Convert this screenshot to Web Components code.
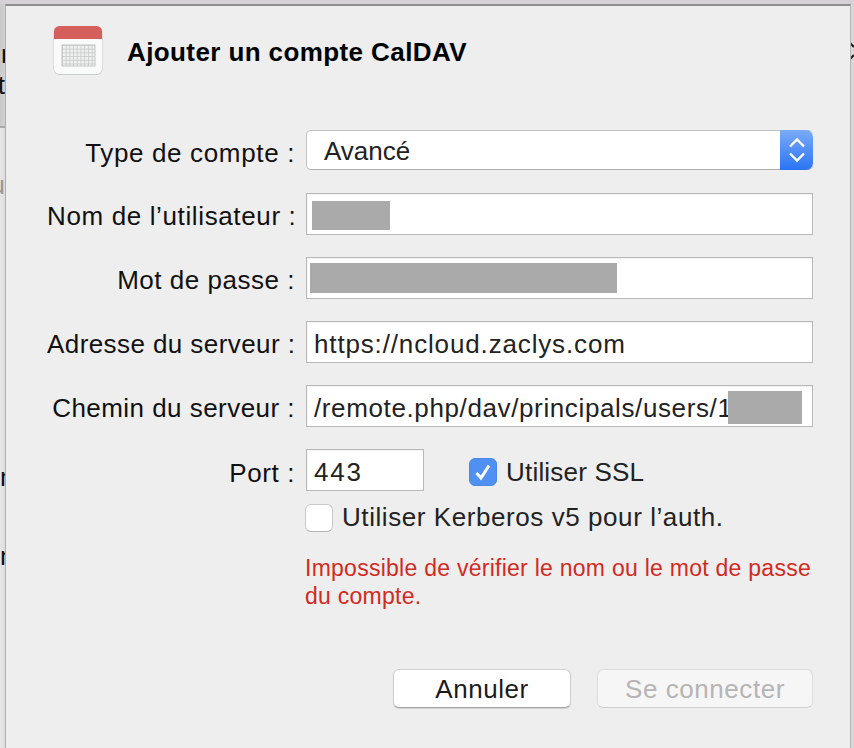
<!DOCTYPE html>
<html lang="fr"><head><meta charset="utf-8"><title>Ajouter un compte CalDAV</title>
<style>
html,body{margin:0;padding:0;height:100%}
body{width:854px;height:748px;overflow:hidden;font-family:"Liberation Sans",Arial,sans-serif}
</style></head><body>
<desk-backdrop>
<account-dialog>
<span slot="title">Ajouter un compte CalDAV</span>
<form-row label="Type de compte :" ls=".65" dy="3"><select-field value="Avancé"></select-field></form-row>
<form-row label="Nom de l’utilisateur :" ls=".63" dy="2"><text-field><redact-mark w="78" h="29" x="5" y="7"></redact-mark></text-field></form-row>
<form-row label="Mot de passe :" ls=".52" dy="2"><text-field><redact-mark w="307" h="30" x="3" y="5"></redact-mark></text-field></form-row>
<form-row label="Adresse du serveur :" ls=".42" dy="2"><text-field ls=".85">https://ncloud.zaclys.com</text-field></form-row>
<form-row label="Chemin du serveur :" ls=".46" dy="2"><text-field ls=".62">/remote.php/dav/principals/users/1<redact-mark w="74" h="33" x="421" y="5"></redact-mark></text-field></form-row>
<port-row></port-row>
</account-dialog>
</desk-backdrop>
<script>
function def(name, html){
  customElements.define(name, class extends HTMLElement{
    connectedCallback(){
      if(this.shadowRoot) return;
      const r=this.attachShadow({mode:'open'});
      r.innerHTML=typeof html==='function'?html(this):html;
    }
  });
}
def('desk-backdrop',`<style>
:host{display:block;position:relative;width:854px;height:748px;overflow:hidden;background:#e3e3e3}
.top{height:4px;background:#d5d2d5}
.l{position:absolute;left:0;top:4px;width:6px;height:123px;background:linear-gradient(90deg,#c9c9c9,#d3d3d3)}
.l2{position:absolute;left:0;top:128px;width:6px;height:620px;background:linear-gradient(90deg,#e6e6e6,#dcdcdc)}
.ln{position:absolute;left:0;top:126px;width:6px;height:2px;background:#a9a9a9}
.r{position:absolute;right:0;top:4px;width:4px;height:744px;background:#d8d8d8}
.g{position:absolute;font-size:26px;line-height:30px;color:#111;height:30px;overflow:hidden;width:5px}
svg.ch{position:absolute;right:0;top:40px}
</style>
<div class="top"></div><div class="l"></div><div class="l2"></div><div class="ln"></div><div class="r"></div>
<div class="g" style="left:1px;top:39px;height:24px">p</div>
<div class="g" style="left:-9px;width:14px;top:70px;text-align:right">t</div>
<div class="g" style="left:-14px;width:19px;top:170px;color:#999;text-align:right">u</div>
<div class="g" style="left:0;top:462px">n</div>
<div class="g" style="left:0;top:541px">n</div>
<svg class="ch" width="4" height="24" viewBox="0 0 4 24" fill="none" stroke="#222" stroke-width="2.200"><path d="M0 3 4 7M0 19 4 15"/></svg>
<slot></slot>`);
def('account-dialog',`<style>
:host{display:block;position:absolute;left:5px;top:4px;width:846px;height:760px;box-sizing:border-box;background:#eeeeee;border-left:1px solid #aeaeae;border-right:1px solid #b5b5b5;border-top:2px solid #8f8f8f;padding:19px 37px 0 41px;font-size:26px;color:#111}
header{display:flex;align-items:center;gap:24px;height:50px;margin-left:6px}
h1{margin:0;font-size:26px;font-weight:700;color:#000;line-height:30px;letter-spacing:.4px;transform:translateY(2px)}
main{display:flex;flex-direction:column;gap:22px;margin-top:54px}
.msg{margin:15px 0 0 258px;color:#d22a1e;font-size:23px;letter-spacing:.26px;line-height:28px;width:540px}
footer{display:flex;justify-content:flex-end;gap:26px;margin-top:59px;letter-spacing:.55px;width:766px}
</style>
<header><calendar-icon></calendar-icon><h1><slot name="title"></slot></h1></header>
<main><slot></slot></main>
<div class="msg">Impossible de vérifier le nom ou le mot de passe<br>du compte.</div>
<footer><push-button>Annuler</push-button><push-button disabled>Se connecter</push-button></footer>`);
def('calendar-icon',`<style>
:host{display:block;width:50px;height:50px;flex:none}svg{display:block}
</style><svg width="50" height="50" viewBox="0 0 50 50">
<defs><pattern id="p" x="9" y="20" width="3.700" height="3.700" patternUnits="userSpaceOnUse"><path d="M0 0H3.700M0 0V3.700" stroke="#c4c6c6" stroke-width="1.500" fill="none"/></pattern></defs>
<rect x="0.500" y="1" width="49" height="49" rx="6" fill="#c9c9c9"/>
<rect x="1" y="1" width="48" height="48" rx="5.500" fill="#f9fbfa"/>
<path d="M1 14V6.500A5.500 5.500 0 0 1 6.500 1H43.500A5.500 5.500 0 0 1 49 6.500V14Z" fill="#d55f5c"/>
<rect x="9" y="20" width="33" height="21" fill="#eef0ef"/>
<rect x="9" y="20" width="33" height="21" fill="url(#p)"/>
<rect x="9" y="20" width="33" height="21" fill="none" stroke="#c4c6c6"/>
</svg>`);
def('form-row',h=>`<style>
:host{display:grid;grid-template-columns:248px 507px;grid-auto-rows:42px;column-gap:11px;align-items:center}
label{text-align:right;white-space:nowrap;color:#111;letter-spacing:${h.getAttribute('ls')||0}px;transform:translateY(${h.getAttribute('dy')||0}px)}
</style><label>${h.getAttribute('label')}</label><div><slot></slot></div>`);
def('text-field',h=>`<style>
:host{display:flex;align-items:center;position:relative;box-sizing:border-box;height:42px;background:#fff;border:1px solid #b8b8b8;box-shadow:inset 0 1px 0 #f1f1f1,inset 1px 0 0 #f5f5f5;padding:4px 7px 0;color:#222;white-space:nowrap;overflow:hidden;letter-spacing:${h.getAttribute('ls')||0}px}
</style><slot></slot>`);
def('redact-mark',h=>`<style>
:host{display:block;position:absolute;background:#aaaaaa;left:${h.getAttribute('x')}px;top:${h.getAttribute('y')}px;width:${h.getAttribute('w')}px;height:${h.getAttribute('h')}px}
</style>`);
def('select-field',h=>`<style>
:host{display:flex;box-sizing:border-box;height:40px;border:1px solid #c2c2c2;border-right:0;border-bottom-color:#aeaeae;border-radius:5px;background:#fff;color:#222;align-items:center;padding-left:17px}
span{flex:1;transform:translateY(1px)}
.b{width:33px;height:40px;margin:-1px 0;background:linear-gradient(#7aabf6,#2a74f5);border-radius:0 7px 7px 0;display:flex;align-items:center;justify-content:center}
svg{display:block}
</style><span>${h.getAttribute('value')}</span><div class="b"><svg width="16" height="26" viewBox="0 0 16 26" fill="none" stroke="#fff" stroke-width="2.400"><path d="M1 9.500 8 2.500 15 9.500M1 16.500 8 23.500 15 16.500"/></svg></div>`);
def('port-row',`<style>
:host{display:block}
.r1{display:grid;grid-template-columns:248px auto 1fr;column-gap:11px;align-items:center}
label{text-align:right;letter-spacing:.6px;transform:translateY(3px)}
.r1>div{display:flex;align-items:center}
text-field{width:118px}
.ssl{margin:4px 0 0 45px}
.r2{margin:11px 0 0 258px;display:block}
</style><div class="r1"><label>Port :</label><div><text-field ls="1.800">443</text-field><mac-check class="ssl" ls=".2" checked>Utiliser SSL</mac-check></div></div>
<div class="r2"><mac-check ls=".57">Utiliser Kerberos v5 pour l’auth.</mac-check></div>`);
def('mac-check',h=>`<style>
:host{display:inline-flex;align-items:center;gap:9px;color:#222;white-space:nowrap;letter-spacing:${h.getAttribute('ls')||0}px}
.c{width:28px;height:28px;box-sizing:border-box;border-radius:6px;flex:none;display:flex;align-items:center;justify-content:center;${h.hasAttribute('checked')?'background:#4f90f2;border:1px solid #4a88e8;':'background:#fff;border:1px solid #c8c8c8;border-bottom-color:#b4b4b4;'}}
svg{display:block}
</style><div class="c">${h.hasAttribute('checked')?'<svg width="18" height="18" viewBox="0 0 18 18" fill="none" stroke="#fff" stroke-width="3"><path d="M2.500 10 7 15 15 2.500"/></svg>':''}</div><span><slot></slot></span>`);
def('push-button',h=>{const d=h.hasAttribute('disabled');return `<style>
:host{display:flex;align-items:center;justify-content:center;box-sizing:border-box;height:39px;width:${d?216:178}px;border-radius:6px;${d?'background:#f6f6f6;border:1px solid #dcdcdc;border-bottom-color:#cfcfcf;color:#b6b4b4;':'background:#fff;border:1px solid #cfcfcf;border-bottom:1px solid #a4a4a4;box-shadow:0 1px 1px rgba(0,0,0,.12);color:#1c1c1c;'}}
</style><span style="transform:translateY(1px)"><slot></slot></span>`});
</script>
</body></html>
